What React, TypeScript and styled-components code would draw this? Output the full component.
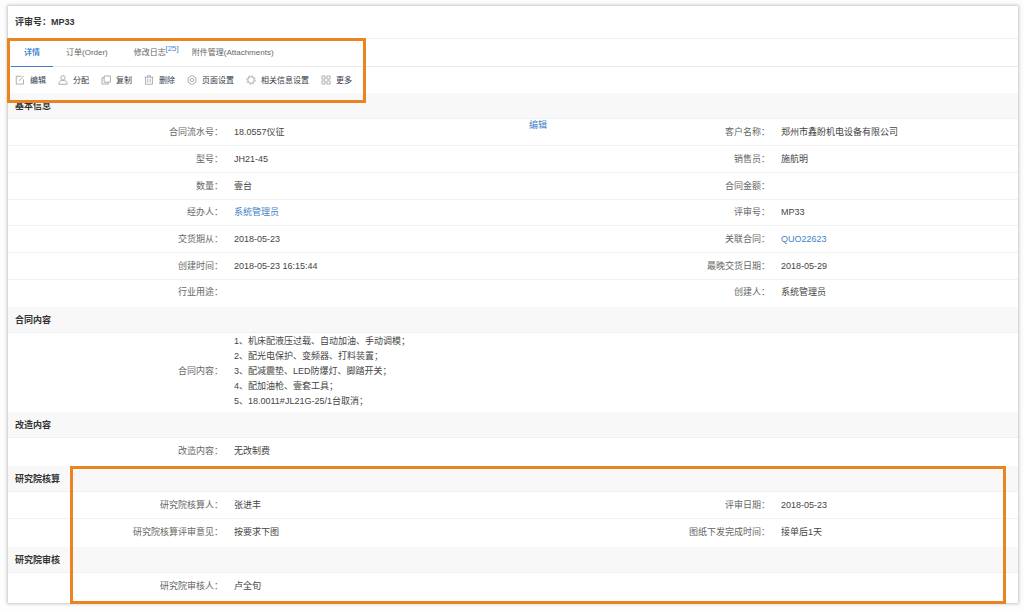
import React from "react";
import styled, { createGlobalStyle } from "styled-components";

const GlobalStyle = createGlobalStyle`
  * { box-sizing: border-box; }
  body {
    margin: 0;
    background: #fdfdfd;
    color: #444;
    font-family: "Liberation Sans", "Noto Sans CJK SC", sans-serif;
    font-size: 9px;
    line-height: 15px;
  }
`;

const Card = styled.main`
  margin: 6px 6px 6px 8px;
  padding-bottom: 2px;
  background: #fff;
  box-shadow: 0 0 3px 1px #c4c4c4;
`;

const Title = styled.h1`
  margin: 0;
  padding: 8px 7px;
  font-size: 9px;
  line-height: 16px;
  color: #333;
`;

const Nav = styled.div`
  position: relative;
`;

const Tabs = styled.div`
  display: flex;
  height: 29px;
  padding-left: 3px;
  border-top: 1px solid #f0f0f0;
  border-bottom: 1px solid #e8ebee;
`;

const Tab = styled.button<{ $active?: boolean }>`
  position: relative;
  margin-bottom: -1px;
  padding: 0 13px;
  border: 0;
  border-bottom: 1px solid ${(p) => (p.$active ? "#3f7dc4" : "transparent")};
  background: none;
  color: ${(p) => (p.$active ? "#2f7bd0" : "#666")};
  font: inherit;
  font-weight: ${(p) => (p.$active ? 500 : 400)};
  font-size: 8px;
  line-height: 28px;
  white-space: nowrap;
`;

const Count = styled.sup`
  position: absolute;
  top: 4px;
  right: 0;
  color: #4a86cc;
  font-size: 8px;
  line-height: 12px;
`;

const Toolbar = styled.div`
  display: flex;
  align-items: center;
  gap: 12px;
  height: 26px;
  padding-left: 7px;
`;

const Tool = styled.button`
  display: flex;
  align-items: center;
  gap: 5px;
  padding: 0;
  border: 0;
  background: none;
  color: #333a4a;
  font: inherit;
  font-size: 8px;
  white-space: nowrap;
`;

const Icon = styled.svg`
  width: 10px;
  height: 10px;
  flex: none;
  fill: none;
  stroke: #999ca2;
  stroke-width: 1.3;
`;

const Frame = styled.div`
  position: absolute;
  border: 3px solid #e98420;
  pointer-events: none;
`;

const NavFrame = styled(Frame)`
  top: 0;
  left: -1px;
  width: 359px;
  height: 65px;
`;

const ReviewFrame = styled(Frame)`
  top: 0;
  bottom: -3px;
  left: 62px;
  right: 12px;
`;

const Review = styled.div`
  position: relative;
`;

const Section = styled.section`
  padding-bottom: 2px;
`;

const Heading = styled.h2`
  margin: 0;
  padding: 6px 7px 4px;
  border-bottom: 1px solid #f0f0f0;
  background: #f8f8f8;
  color: #333;
  font-size: 9px;
  line-height: 15px;
`;

const Fields = styled.dl`
  margin: 0;
`;

const Row = styled.div`
  display: grid;
  grid-template-columns: 217fr 330fr 217fr 246fr;
  align-items: center;
  min-height: 27px;
  &:nth-child(3n + 1) { min-height: 26px; }
  & + & { border-top: 1px solid #f2f2f2; }
`;

const Label = styled.dt`
  padding-right: 2px;
  color: #666;
  text-align: right;
`;

const Value = styled.dd`
  display: flex;
  align-self: stretch;
  align-items: center;
  margin: 0;
  padding-left: 9px;
`;

const Lines = styled.p`
  margin: 0;
  padding: 1px 0;
  white-space: pre-line;
`;

const Link = styled.a`
  color: #3f7fc6;
  text-decoration: none;
`;

const EditLink = styled(Link)`
  align-self: flex-start;
  margin: 0 8px 0 auto;
  line-height: 12px;
`;

const icons = {
  edit: <><path d="M10 2H2v12.500h11.500V7" /><path d="M6.500 9.500L14 1.500" /></>,
  user: <><circle cx="8" cy="4.500" r="3.500" /><path d="M1.500 14.800c0-4 1.500-5.800 4-5.800h5c2.500 0 4 1.800 4 5.800z" /></>,
  copy: <><path d="M5 1.500h10v10H5z" /><path d="M5 4.500H1.500v10h10v-3" /></>,
  trash: <><path d="M1 3.500h14M5.500 3V1.200h5V3M2.500 3.500v11.300h11V3.500" /><path d="M6 6v6M10 6v6" /></>,
  page: <><path d="M8 .8L14.300 4.400v7.200L8 15.200 1.700 11.600V4.400z" strokeLinejoin="round" /><circle cx="8" cy="8" r="2.600" /></>,
  gear: <><circle cx="8" cy="8" r="5.200" /><circle cx="8" cy="8" r="6.800" strokeDasharray="2.670 2.670" /></>,
  grid: <path d="M1.500 1.500h5v5h-5zM9.500 1.500h5v5h-5zM1.500 9.500h5v5h-5zM9.500 9.500h5v5h-5z" />,
};

const tools: [keyof typeof icons, string][] = [
  ["edit", "编辑"],
  ["user", "分配"],
  ["copy", "复制"],
  ["trash", "删除"],
  ["page", "页面设置"],
  ["gear", "相关信息设置"],
  ["grid", "更多"],
];

type Field = [label: string, value: React.ReactNode];

const basic: Field[][] = [
  [["合同流水号", <>18.0557仪征<EditLink href="#edit">编辑</EditLink></>], ["客户名称", "郑州市鑫盼机电设备有限公司"]],
  [["型号", "JH21-45"], ["销售员", "施航明"]],
  [["数量", "壹台"], ["合同金额", ""]],
  [["经办人", <Link href="#admin">系统管理员</Link>], ["评审号", "MP33"]],
  [["交货期从", "2018-05-23"], ["关联合同", <Link href="#quo">QUO22623</Link>]],
  [["创建时间", "2018-05-23 16:15:44"], ["最晚交货日期", "2018-05-29"]],
  [["行业用途", ""], ["创建人", "系统管理员"]],
];

const contract = `1、机床配液压过载、自动加油、手动调模；
2、配光电保护、变频器、打料装置；
3、配减震垫、LED防爆灯、脚踏开关；
4、配加油枪、壹套工具；
5、18.0011#JL21G-25/1台取消；`;

function Group({ title, rows }: { title: string; rows: Field[][] }) {
  return (
    <Section>
      <Heading>{title}</Heading>
      <Fields>
        {rows.map((row, i) => (
          <Row key={i}>
            {row.map(([label, value]) => (
              <React.Fragment key={label}>
                <Label>{label}：</Label>
                <Value>{value}</Value>
              </React.Fragment>
            ))}
          </Row>
        ))}
      </Fields>
    </Section>
  );
}

export default function App() {
  return (
    <>
      <GlobalStyle />
      <Card>
        <Title>评审号：MP33</Title>
        <Nav>
          <Tabs role="tablist">
            <Tab role="tab" aria-selected="true" $active>详情</Tab>
            <Tab role="tab">订单(Order)</Tab>
            <Tab role="tab">修改日志<Count>[25]</Count></Tab>
            <Tab role="tab">附件管理(Attachments)</Tab>
          </Tabs>
          <Toolbar>
            {tools.map(([icon, text]) => (
              <Tool key={text}>
                <Icon viewBox="0 0 16 16" aria-hidden="true">{icons[icon]}</Icon>
                {text}
              </Tool>
            ))}
          </Toolbar>
          <NavFrame />
        </Nav>
        <Group title="基本信息" rows={basic} />
        <Group title="合同内容" rows={[[["合同内容", <Lines>{contract}</Lines>]]]} />
        <Group title="改造内容" rows={[[["改造内容", "无改制费"]]]} />
        <Review>
          <Group
            title="研究院核算"
            rows={[
              [["研究院核算人", "张进丰"], ["评审日期", "2018-05-23"]],
              [["研究院核算评审意见", "按要求下图"], ["图纸下发完成时间", "接单后1天"]],
            ]}
          />
          <Group title="研究院审核" rows={[[["研究院审核人", "卢全旬"]]]} />
          <ReviewFrame />
        </Review>
      </Card>
    </>
  );
}
